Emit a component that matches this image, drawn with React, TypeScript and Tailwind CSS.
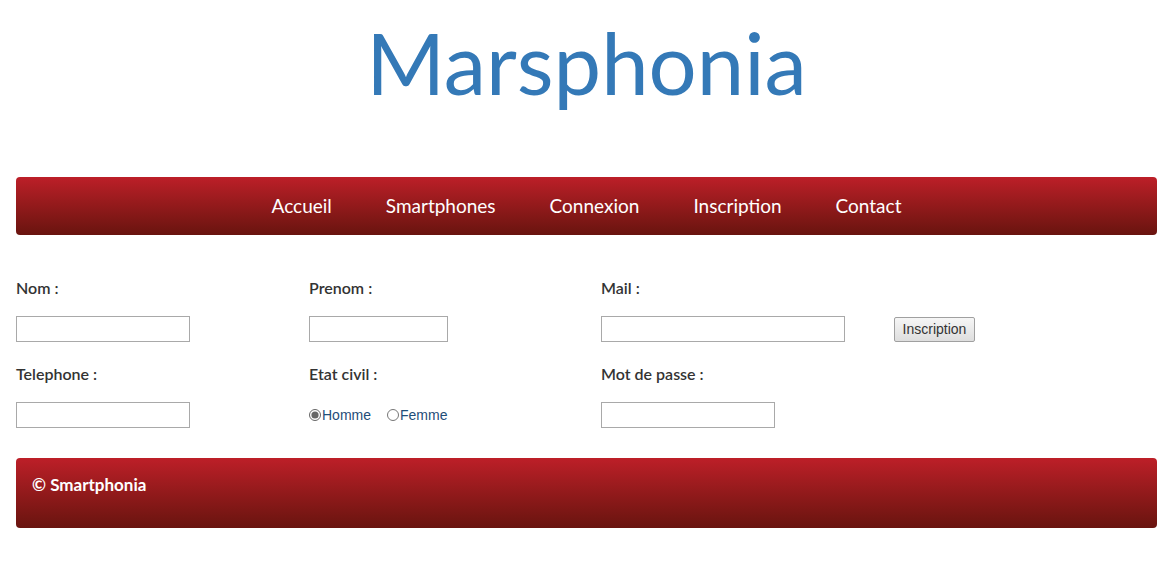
const font = { fontFamily: "Lato, 'Open Sans', sans-serif" };

function Label({ children }: { children: React.ReactNode }) {
  return <div className="h-[24px] text-[16px] font-semibold text-[#333] leading-[24px]">{children}</div>;
}

function Field({ w }: { w: string }) {
  return <input type="text" className={`${w} h-[26px] border border-[#a9a9a9] bg-white outline-none`} />;
}

export default function App() {
  return (
    <div className="w-full min-h-[567px] bg-white px-4" style={font}>
      <h1 className="h-[130px] pt-[12px] text-center text-[85px] leading-[100px] text-[#3479b7] font-normal">
        Marsphonia
      </h1>

      <nav className="mt-[47px] h-[58px] rounded-[4px] bg-gradient-to-b from-[#bd1f28] to-[#69140f] flex items-center justify-center gap-[54px] text-white text-[19px]">
        <a href="#">Accueil</a>
        <a href="#">Smartphones</a>
        <a href="#">Connexion</a>
        <a href="#">Inscription</a>
        <a href="#">Contact</a>
      </nav>

      <form className="mt-[41px] grid grid-cols-[293px_292px_293px_auto]">
        <div className="flex flex-col gap-[16px]">
          <Label>Nom :</Label>
          <Field w="w-[174px]" />
        </div>
        <div className="flex flex-col gap-[16px]">
          <Label>Prenom :</Label>
          <Field w="w-[139px]" />
        </div>
        <div className="flex flex-col gap-[16px]">
          <Label>Mail :</Label>
          <Field w="w-[244px]" />
        </div>
        <div className="flex flex-col justify-end">
          <button
            type="button"
            className="w-[81px] h-[25px] border border-[#a0a0a0] rounded-[2px] bg-gradient-to-b from-[#f6f6f6] to-[#dedede] text-[14px] text-[#333]"
            style={{ fontFamily: "'Liberation Sans', Arial, sans-serif" }}
          >
            Inscription
          </button>
        </div>

        <div className="flex flex-col gap-[16px] mt-[20px]">
          <Label>Telephone :</Label>
          <Field w="w-[174px]" />
        </div>
        <div className="flex flex-col gap-[16px] mt-[20px]">
          <Label>Etat civil :</Label>
          <div
            className="h-[26px] flex items-center text-[14px]"
            style={{ fontFamily: "'Liberation Sans', Arial, sans-serif" }}
          >
            <label className="flex items-center">
              <input type="radio" name="etat" defaultChecked className="m-0 w-[12px] h-[12px] accent-[#666]" />
              <span className="ml-[1px] text-[#1f4e79]">Homme</span>
            </label>
            <label className="flex items-center ml-[16px]">
              <input type="radio" name="etat" className="m-0 w-[12px] h-[12px]" />
              <span className="ml-[1px] text-[#1f4e79]">Femme</span>
            </label>
          </div>
        </div>
        <div className="flex flex-col gap-[16px] mt-[20px]">
          <Label>Mot de passe :</Label>
          <Field w="w-[174px]" />
        </div>
        <div />
      </form>

      <footer className="mt-[30px] h-[70px] rounded-[4px] bg-gradient-to-b from-[#bd1f28] to-[#69140f] px-4 pt-[14px] text-white text-[17px] font-bold">
        © Smartphonia
      </footer>
    </div>
  );
}
